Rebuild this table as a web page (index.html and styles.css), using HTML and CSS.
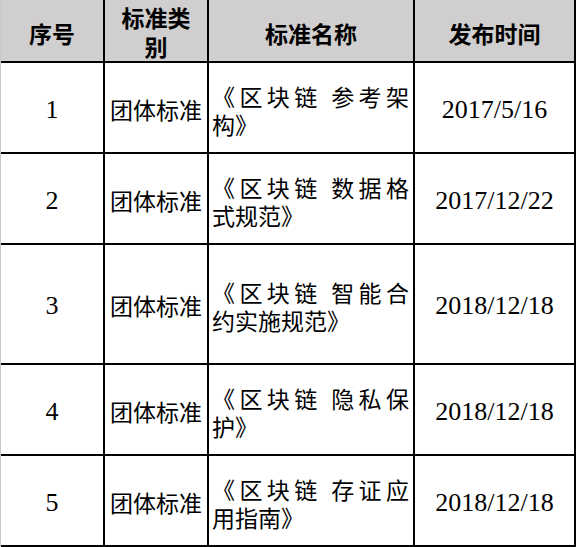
FILE: index.html
```html
<!DOCTYPE html>
<html lang="zh-CN">
<head>
<meta charset="utf-8">
<title>区块链标准</title>
<link rel="stylesheet" href="styles.css">
</head>
<body>
<div class="table">
  <div class="cell head">序号</div>
  <div class="cell head head-two"><span>标准类</span><span>别</span></div>
  <div class="cell head">标准名称</div>
  <div class="cell head">发布时间</div>

  <div class="cell num">1</div>
  <div class="cell cjk">团体标准</div>
  <div class="cell name"><span class="l1">《区块链 参考架</span><span class="l2">构》</span></div>
  <div class="cell num">2017/5/16</div>

  <div class="cell num">2</div>
  <div class="cell cjk">团体标准</div>
  <div class="cell name"><span class="l1">《区块链 数据格</span><span class="l2">式规范》</span></div>
  <div class="cell num">2017/12/22</div>

  <div class="cell num">3</div>
  <div class="cell cjk">团体标准</div>
  <div class="cell name"><span class="l1">《区块链 智能合</span><span class="l2">约实施规范》</span></div>
  <div class="cell num">2018/12/18</div>

  <div class="cell num">4</div>
  <div class="cell cjk">团体标准</div>
  <div class="cell name"><span class="l1">《区块链 隐私保</span><span class="l2">护》</span></div>
  <div class="cell num">2018/12/18</div>

  <div class="cell num">5</div>
  <div class="cell cjk">团体标准</div>
  <div class="cell name"><span class="l1">《区块链 存证应</span><span class="l2">用指南》</span></div>
  <div class="cell num">2018/12/18</div>
</div>
</body>
</html>
```

FILE: styles.css
```css
html, body {
  margin: 0;
  padding: 0;
  background: #ffffff;
}

.table {
  display: grid;
  grid-template-columns: 102px 102px 204px 159px;
  grid-template-rows: 61px 89px 89px 118px 89px 89px;
  gap: 2px;
  width: 576px;
  height: 547px;
  box-sizing: border-box;
  padding: 0 2px 2px 0;
  border-left: 1px solid #c9c9c9;
  background: #000000;
  font-family: "Noto Sans CJK SC", sans-serif;
  color: #000000;
}

.cell {
  background: #ffffff;
  display: flex;
  align-items: center;
  justify-content: center;
}

.head {
  background: #d0cece;
  font-size: 23px;
  font-weight: 700;
  padding-top: 5px;
  box-sizing: border-box;
}

.head-two {
  flex-direction: column;
  line-height: 29px;
  padding-top: 3px;
}

.cjk {
  font-size: 23px;
  padding-top: 2px;
  box-sizing: border-box;
}

.num {
  font-family: "Liberation Serif", "Times New Roman", serif;
  font-size: 26px;
  padding-top: 4px;
  box-sizing: border-box;
}

.name {
  flex-direction: column;
  align-items: stretch;
  padding: 4px 4px 0 3px;
  box-sizing: border-box;
  font-size: 23px;
  line-height: 28px;
}

.name .l1 {
  display: block;
  text-align: justify;
  text-align-last: justify;
}

.name .l2 {
  display: block;
  text-align: left;
}
```
